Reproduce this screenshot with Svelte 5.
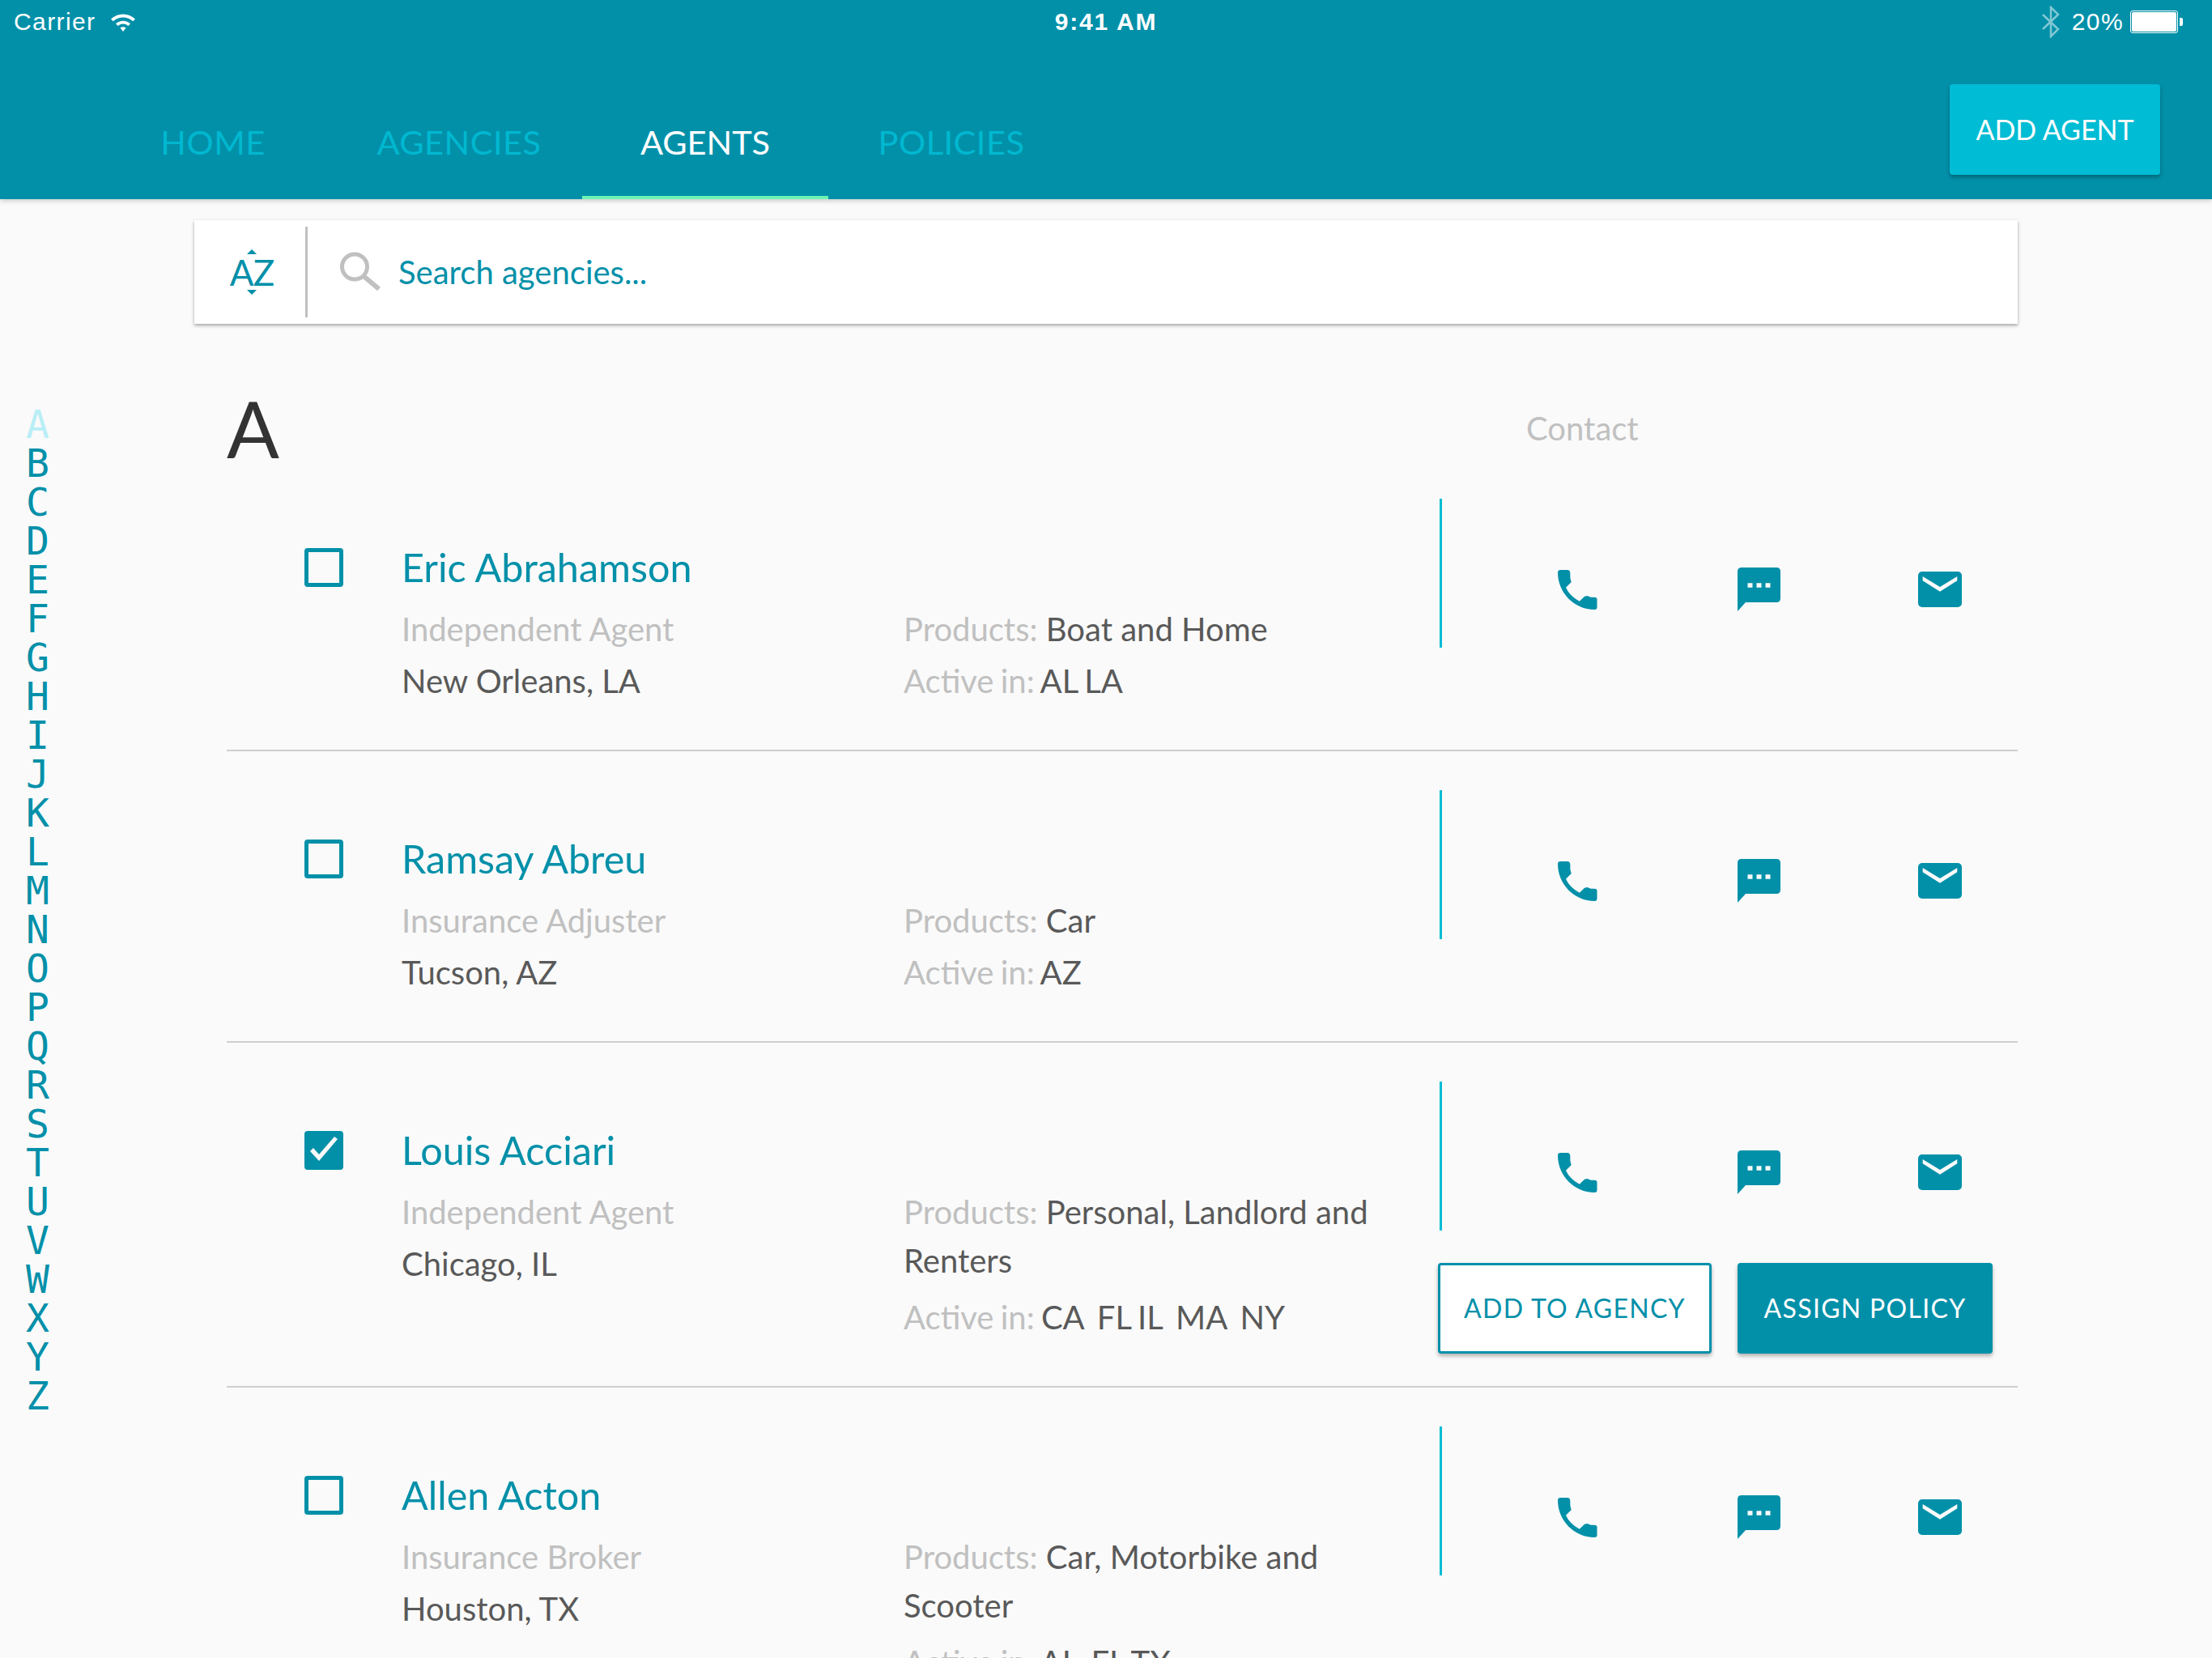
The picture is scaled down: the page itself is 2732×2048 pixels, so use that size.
<script>
  const letters = 'ABCDEFGHIJKLMNOPQRSTUVWXYZ'.split('');
  const tabs = ['HOME', 'AGENCIES', 'AGENTS', 'POLICIES'];

  const agents = [
    { name: 'Eric Abrahamson', role: 'Independent Agent', city: 'New Orleans, LA', products: 'Boat and Home', active: 'AL LA' },
    { name: 'Ramsay Abreu', role: 'Insurance Adjuster', city: 'Tucson, AZ', products: 'Car', active: 'AZ' },
    { name: 'Louis Acciari', role: 'Independent Agent', city: 'Chicago, IL', products: 'Personal, Landlord and Renters', active: 'CA  FL IL  MA  NY', selected: true, long: true },
    { name: 'Allen Acton', role: 'Insurance Broker', city: 'Houston, TX', products: 'Car, Motorbike and Scooter', active: 'AL  FL TX', long: true }
  ];
</script>

<div class="page">
  <header class="header">
    <div class="status">
      <div class="status-left">
        <span>Carrier</span>
        <svg class="wifi" viewBox="0 0 32 24" width="32" height="24">
          <path d="M1 8.5C9.5 .5 22.500 .5 31 8.500L28.300 11.300C21.300 4.800 10.700 4.800 3.700 11.300Z" />
          <path d="M7 14.300C12 9.500 20 9.500 25 14.300L22.300 17C18.800 13.700 13.200 13.700 9.700 17Z" />
          <path d="M12.500 19.500C14.500 17.800 17.500 17.800 19.500 19.500L16 24Z" />
        </svg>
      </div>
      <div class="time">9:41 AM</div>
      <div class="status-right">
        <svg class="bt" viewBox="0 0 24 40" width="24" height="40">
          <path d="M2 11L21 29L12 38V2L21 11L2 29" fill="none" stroke="#fff" stroke-width="2.500" />
        </svg>
        <span>20%</span>
        <div class="battery"><div class="battery-fill"></div></div>
        <div class="battery-nub"></div>
      </div>
    </div>
    <div class="nav-row">
      <nav class="tabs">
        {#each tabs as tab}
          <div class="tab" class:current={tab === 'AGENTS'}>{tab}</div>
        {/each}
      </nav>
      <button class="add-agent">ADD AGENT</button>
    </div>
  </header>

  <div class="content">
    <div class="rail">
      {#each letters as letter, i}
        <div class="letter" class:dim={i === 0}>{letter}</div>
      {/each}
    </div>

    <main class="main">
      <div class="search">
        <div class="sort">
          <svg viewBox="0 0 12 6" width="12" height="6"><path d="M6 0L12 6H0Z" /></svg>
          <span class="az">AZ</span>
          <svg viewBox="0 0 12 6" width="12" height="6"><path d="M0 0H12L6 6Z" /></svg>
        </div>
        <div class="search-field">
          <svg class="glass" viewBox="0 0 52 52" width="52" height="52">
            <circle cx="20" cy="19.500" r="15.500" fill="none" stroke="#c0c0c0" stroke-width="5" />
            <path d="M31 31L50 47" stroke="#c0c0c0" stroke-width="6" fill="none" />
          </svg>
          <span class="placeholder">Search agencies...</span>
        </div>
      </div>

      <section class="list">
        <div class="section-head">
          <div class="initial">A</div>
          <div class="contact-label">Contact</div>
        </div>

        {#each agents as a, i}
          <article class="row" class:first={i === 0}>
            <div class="check-col">
              <div class="check" class:on={a.selected}>
                {#if a.selected}
                  <svg viewBox="0 0 48 48" width="48" height="48">
                    <path d="M7 25L18 37L41 10L37 7L18 29L11 21Z" fill="#fafafa" />
                  </svg>
                {/if}
              </div>
            </div>

            <div class="info">
              <div class="name">{a.name}</div>
              <div class="details">
                <div class="left">
                  <div class="muted">{a.role}</div>
                  <div class="value">{a.city}</div>
                </div>
                <div class="right">
                  <div class="products" class:long={a.long}><span class="muted">Products:</span>{' '}<span class="value">{a.products}</span></div>
                  <div class="active"><span class="muted">Active in:</span>{' '}<span class="value keep">{a.active}</span></div>
                </div>
              </div>
            </div>

            <div class="contact">
              <div class="contact-icons">
                <div class="slot">
                  <svg viewBox="0 0 49 49" width="49" height="49">
                    <path d="M0 3Q0 0 3.500 0H12Q15 0 15.300 3.500L15.400 10L16.700 15L10 21.700Q14.500 32 26.800 38.700L33 32.700L36.400 32L41 33.700H45.500Q48.500 33.700 48.500 36.500V46Q48.500 49 45.500 49C20 49 0 28 0 3Z" />
                  </svg>
                </div>
                <div class="slot">
                  <svg viewBox="0 0 53 54" width="53" height="54">
                    <path d="M5 0H48Q53 0 53 5V38Q53 43 48 43H10L0 54V5Q0 0 5 0Z" />
                    <path class="cut" d="M12.500 19.300H18.500V24.700H12.500ZM23.500 19.300H29.500V24.700H23.500ZM34.500 19.300H40.500V24.700H34.500Z" />
                  </svg>
                </div>
                <div class="slot">
                  <svg viewBox="0 0 54 44" width="54" height="44">
                    <rect width="54" height="44" rx="5" />
                    <path class="cut" d="M5.700 6L27 19L48.300 6V11.300L27 24.700L5.700 11.300Z" />
                  </svg>
                </div>
              </div>
              {#if a.selected}
                <div class="actions">
                  <button class="btn outline">ADD TO AGENCY</button>
                  <button class="btn solid">ASSIGN POLICY</button>
                </div>
              {/if}
            </div>
          </article>
        {/each}
      </section>
    </main>
  </div>
</div>

<style>
  :global(body) {
    background: #fafafa;
  }

  .page {
    height: 2048px;
    overflow: hidden;
    background: #fafafa;
    font-family: Lato, sans-serif;
    color: #555;
  }

  button {
    font-family: inherit;
    cursor: pointer;
  }

  /* top bar */
  .header {
    height: 246px;
    background: #0290a9;
    box-shadow: 0 2px 6px rgba(0, 0, 0, 0.2);
    position: relative;
  }

  .status {
    height: 56px;
    display: grid;
    grid-template-columns: minmax(0, 1fr) auto minmax(0, 1fr);
    align-items: start;
    padding: 8px 17px 0;
    box-sizing: border-box;
    color: #fff;
    font-family: "Liberation Sans", sans-serif;
    font-size: 30px;
    line-height: 38px;
    letter-spacing: 1.400px;
  }

  .status-left {
    height: 38px;
    display: flex;
    align-items: center;
    gap: 18px;
  }

  .wifi {
    fill: #fff;
  }

  .time {
    font-weight: 700;
    letter-spacing: 1.800px;
  }

  .status-right {
    height: 38px;
    padding-right: 19px;
    display: flex;
    justify-content: flex-end;
    align-items: center;
  }

  .bt {
    opacity: 0.5;
    margin-right: 14px;
  }

  .battery {
    width: 59px;
    height: 28px;
    margin-left: 8px;
    border: 1px solid #fff;
    border-radius: 3px;
    padding: 1px;
    box-sizing: border-box;
  }

  .battery-fill {
    height: 100%;
    background: #fff;
    border-radius: 2px;
  }

  .battery-nub {
    width: 4px;
    height: 10px;
    margin-left: 2px;
    background: #fff;
    border-radius: 0 2px 2px 0;
  }

  .nav-row {
    height: 190px;
    display: flex;
    justify-content: space-between;
    padding: 0 64px 0 111px;
  }

  .tabs {
    display: flex;
    align-self: flex-end;
  }

  .tab {
    width: 304px;
    height: 140px;
    box-sizing: border-box;
    padding-top: 2px;
    display: flex;
    align-items: center;
    justify-content: center;
    border-bottom: 4px solid transparent;
    color: #00b8d0;
    font-size: 41.500px;
    letter-spacing: 0.500px;
  }

  .tab.current {
    color: #fff;
    letter-spacing: 0;
    border-bottom-color: #6ef3b3;
  }

  .add-agent {
    align-self: flex-start;
    margin-top: 48px;
    width: 260px;
    height: 112px;
    padding: 0 0 2px;
    border: none;
    border-radius: 4px;
    background: #00bcd4;
    color: #fff;
    font-size: 34px;
    box-shadow: 0 3px 5px rgba(0, 0, 0, 0.3);
  }

  .content {
    display: flex;
  }

  /* alphabet */
  .rail {
    width: 240px;
    box-sizing: border-box;
    padding: 254px 0 0 32px;
    font-family: "DejaVu Sans Mono", monospace;
    font-size: 48px;
    line-height: 48px;
    color: #0290a9;
  }

  .letter.dim {
    color: #b9eef6;
  }

  .main {
    width: 2252px;
  }

  /* search card */
  .search {
    height: 128px;
    margin-top: 26px;
    box-sizing: border-box;
    padding: 8px 0;
    display: flex;
    background: #fff;
    box-shadow: 0 2px 4px rgba(0, 0, 0, 0.35);
  }

  .sort {
    width: 140px;
    box-sizing: border-box;
    padding-left: 5px;
    border-right: 3px solid #c0c0c0;
    display: flex;
    flex-direction: column;
    align-items: center;
    justify-content: center;
    gap: 2px;
    fill: #0290a9;
  }

  .az {
    color: #0290a9;
    font-size: 44px;
    line-height: 40px;
    letter-spacing: -1px;
  }

  .search-field {
    display: flex;
    align-items: center;
    gap: 22px;
    padding-left: 38px;
  }

  .placeholder {
    color: #0290a9;
    font-size: 40px;
  }

  /* list */
  .list {
    padding-left: 40px;
  }

  .section-head {
    display: flex;
    margin-top: 91px;
    height: 75px;
  }

  .initial {
    width: 1605px;
    font-size: 96px;
    line-height: 76px;
    color: #333;
  }

  .contact-label {
    font-size: 40px;
    line-height: 76px;
    color: #c0c0c0;
  }

  .row {
    display: grid;
    grid-template-columns: 216px 1282px 1fr;
    border-top: 2px solid #cfcfcf;
  }

  .row.first {
    border-top-color: transparent;
  }

  .check-col {
    padding: 109px 0 0 96px;
  }

  .check {
    width: 48px;
    height: 48px;
    box-sizing: border-box;
    border: 5px solid #0290a9;
    border-radius: 4px;
    overflow: hidden;
  }

  .check.on {
    background: #0290a9;
  }

  .check svg {
    display: block;
    margin: -5px;
  }

  .info {
    padding: 100px 0 53px;
  }

  .name {
    font-size: 48.500px;
    line-height: 64px;
    color: #0290a9;
  }

  .details {
    display: flex;
    margin-top: 13px;
    font-size: 40px;
    line-height: 64px;
  }

  .left {
    width: 620px;
    flex: none;
  }

  .right {
    width: 622px;
  }

  .products {
    line-height: 60px;
    padding-top: 2px;
    margin-bottom: 2px;
  }

  .products.long {
    margin-bottom: 8px;
  }

  .active {
    word-spacing: -2px;
  }

  .muted {
    color: #c0c0c0;
  }

  .value {
    color: #595959;
  }

  .keep {
    white-space: pre-wrap;
  }

  .contact {
    padding-top: 48px;
  }

  .contact-icons {
    height: 184px;
    box-sizing: border-box;
    border-left: 3px solid #00bcd4;
    padding: 85px 0 0 55px;
    display: flex;
    align-items: flex-start;
    fill: #0290a9;
  }

  .slot {
    width: 224px;
    height: 54px;
    display: flex;
    align-items: center;
    justify-content: center;
  }

  .cut {
    fill: #fafafa;
  }

  .actions {
    display: flex;
    gap: 32px;
    margin: 40px 0 0 -2px;
  }

  .btn {
    height: 112px;
    padding: 0 0 2px;
    border-radius: 4px;
    font-size: 32px;
    letter-spacing: 1.300px;
    box-shadow: 0 3px 5px rgba(0, 0, 0, 0.3);
  }

  .outline {
    width: 338px;
    border: 3px solid #0290a9;
    background: #fff;
    color: #0290a9;
  }

  .solid {
    width: 315px;
    border: none;
    background: #0290a9;
    color: #fff;
  }
</style>
